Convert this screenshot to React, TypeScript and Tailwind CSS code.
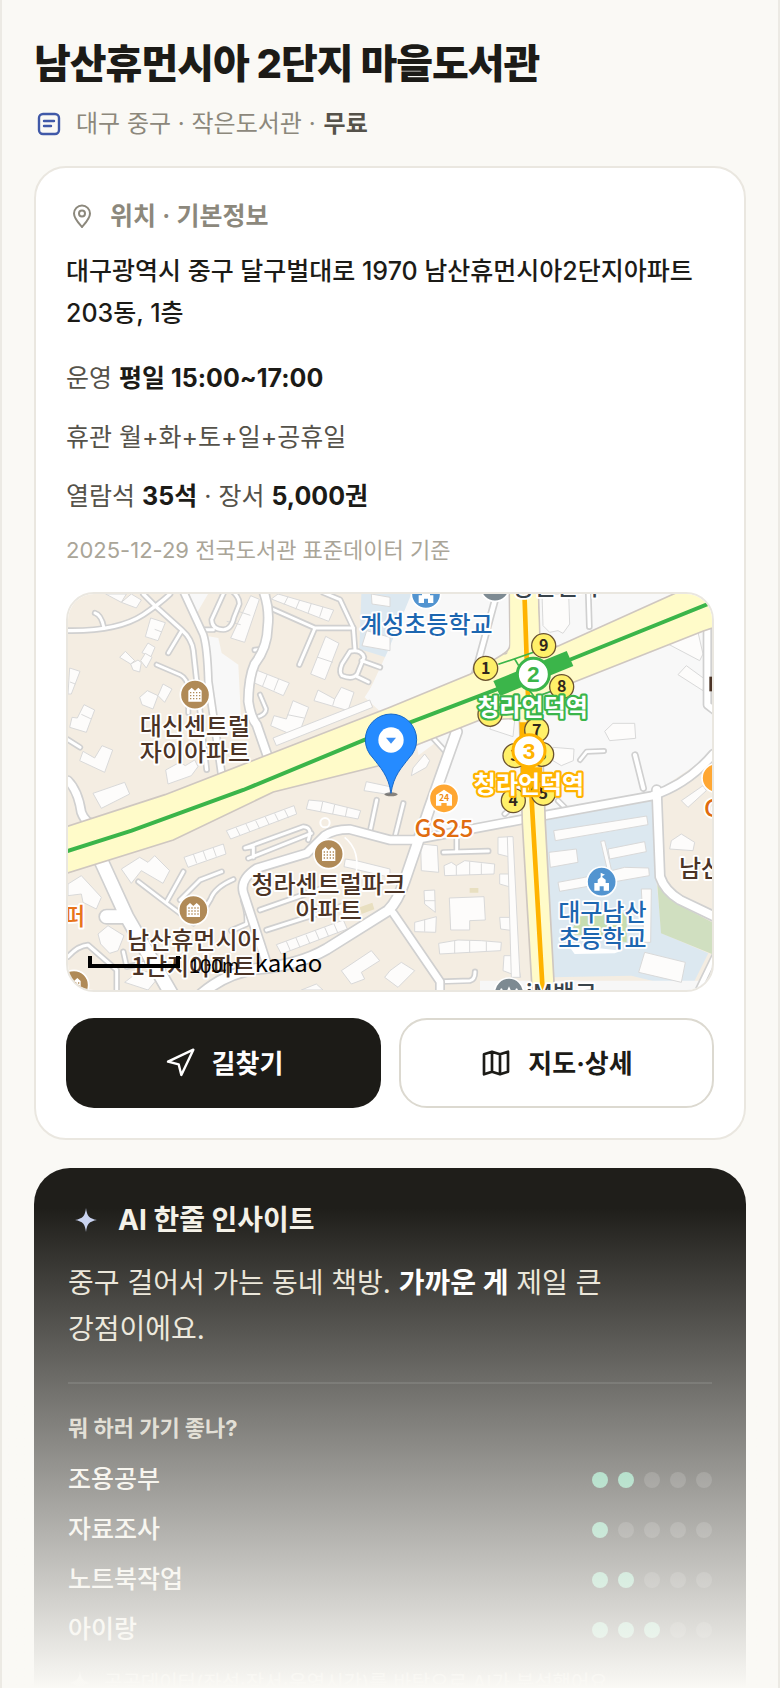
import React from "react";

type Road = { d: string; w: number };

const roads: Road[] = [
  { d: "M0 110 Q150 112 226 62 Q280 25 306 0", w: 10 },
  { d: "M226 0 L266 40 L341 107 Q372 135 376 170 L386 262 L416 527", w: 10 },
  { d: "M341 110 L301 177", w: 9 },
  { d: "M81 57 Q100 62 108 102", w: 9 },
  { d: "M436 107 L406 107 M466 0 L431 77 Q432 107 466 107 Q490 106 498 70 L514 30 Q514 8 491 -10", w: 9 },
  { d: "M606 42 L741 102 H856 M741 102 L694 212", w: 9 },
  { d: "M766 -4 L816 17 L856 102 L861 167", w: 9 },
  { d: "M846 172 Q880 165 888 190 L868 240 Q855 258 822 245 Q812 235 822 210 Z M881 200 L936 220 M866 247 L901 264", w: 9 },
  { d: "M266 212 L336 242 Q361 255 361 290 V357", w: 8 },
  { d: "M576 302 L594 345 Q594 362 566 370", w: 8 },
  { d: "M0 437 L36 460", w: 9 },
  { d: "M560 168 L590 165", w: 9 },
  { d: "M0 560 Q30 590 40 655 Q55 695 90 690", w: 22 },
  { d: "M926 618 L906 713 M1006 628 L981 728", w: 9 },
  { d: "M1166 728 V773 M1126 775 L1261 771", w: 9 },
  { d: "M211 863 L296 928 L376 988 M296 923 L346 833 M336 918 L396 858 L461 833", w: 9 },
  { d: "M496 856 Q440 880 428 915 L396 968", w: 9 },
  { d: "M541 793 L730 718 M531 762 L706 698 Q735 700 721 738 M531 762 L556 758 V790", w: 9 },
  { d: "M576 948 L776 878 M596 1008 L846 928 M526 920 Q540 960 536 990 L490 1010", w: 10 },
  { d: "M0 1088 Q30 1055 60 1053 L146 1128 V1188 M166 1073 L176 1118 L230 1108", w: 9 },
  { d: "M1116 1163 L1206 1160 Q1221 1156 1221 1133", w: 9 },
  { d: "M1281 18 L1221 238", w: 14 },
  { d: "M1561 0 L1564 98", w: 10 },
  { d: "M1701 483 L1726 583", w: 12 },
  { d: "M1536 498 L1556 473 L1608 471", w: 8 },
  { d: "M1096 433 L1130 470 M1310 660 L1350 625 M1470 620 L1500 650", w: 9 },
];

const mainRoads: Road[] = [
  { d: "M345 -10 L406 122 Q418 160 421 262 L461 540", w: 17 },
  { d: "M586 -10 Q606 45 599 100 Q598 160 560 210 Q542 250 541 322 Q548 370 566 392 L600 490", w: 23 },
  { d: "M90 780 L176 968 L310 1200 M176 968 L115 968", w: 38 },
  { d: "M596 1108 L526 895 Q516 855 566 823 L716 778 L770 725 Q800 705 846 706 L966 738 L1036 738 L1366 676 L1751 606 Q1860 570 1936 480", w: 22 },
  { d: "M400 1200 Q470 1140 560 1125 Q690 1115 776 1065 L960 950 Q990 920 1010 860 L1086 638 L1166 413", w: 28 },
  { d: "M976 958 L1116 1163 V1200", w: 20 },
  { d: "M1766 588 L1776 848 Q1790 890 1836 918 L1940 968", w: 24 },
  { d: "M1886 1200 L1940 1088", w: 14 },
  { d: "M1918 90 V333 L1940 350", w: 18 },
];

const buildings = [
  "113,0 160,25 175,0", "160,25 190,0 220,18 205,42",
  "248,72 292,86 270,140 232,128", "240,147 261,160 249,188 222,176",
  "155,190 172,172 200,200 188,210", "188,210 210,198 220,206 215,234 195,228", "218,200 232,178 252,190 235,222",
  "5,222 36,232 10,300 0,300", "215,310 238,290 270,305 255,345 222,332", "285,270 312,285 290,325 270,305",
  "48,332 80,348 55,415 5,400 12,370 28,372", "102,455 134,468 110,535 35,500 45,472 80,492",
  "293,528 335,505 352,515 380,498 390,518 370,545 300,570",
  "548,5 574,16 530,145 488,132", "630,0 797,48 782,82 610,15",
  "773,127 813,148 771,257 728,240", "565,228 664,267 646,305 555,265",
  "675,320 722,340 700,400 690,430 608,395 618,365 655,375",
  "750,288 800,315 820,280 858,295 840,350 738,320",
  "615,432 905,318 914,340 625,455", "910,0 966,10 966,38 912,30", "896,110 966,130 966,170 882,155",
  "895,563 966,578 966,602 888,590",
  "75,598 170,565 185,600 100,643", "475,710 678,635 686,660 488,735",
  "348,790 466,750 474,780 360,820", "722,618 765,622 878,650 870,675 715,645",
  "160,825 215,790 240,805 260,785 305,830 285,868 220,830 190,868",
  "0,870 40,845 100,910 85,945 45,925 40,900 0,905",
  "90,1020 120,995 168,1025 150,1070 125,1078 98,1050",
  "832,795 865,800 966,825 966,850 828,818", "625,1052 826,978 838,1005 640,1080",
  "820,1130 910,1070 935,1100 880,1135 890,1155 850,1170",
  "170,1165 215,1130 280,1140 240,1188", "700,1188 745,1170 765,1188",
  "1058,750 1108,755 1112,835 1060,830", "1128,815 1150,805 1165,815 1190,800 1280,810 1278,840 1130,845",
  "1290,730 1330,728 1330,790 1290,780", "1295,840 1330,840 1330,880 1295,870", "1295,970 1330,970 1335,1010 1298,1005",
  "1144,912 1248,908 1252,978 1205,980 1205,1008 1148,1008",
  "1068,890 1100,888 1102,955 1070,930", "1040,985 1105,968 1103,1015 1040,1013",
  "1112,1048 1170,1038 1240,1040 1300,1045 1298,1070 1115,1080",
  "1308,1085 1345,1085 1358,1150 1305,1130", "966,1130 1000,1105 1040,1130 990,1180 950,1150",
  "1422,0 1502,0 1505,90 1485,118 1470,110 1445,115 1425,95",
  "1800,150 1890,115 1905,180 1895,200", "1855,215 1910,255 1905,290 1830,242",
  "1610,412 1635,388 1700,388 1703,433 1625,440", "1455,460 1518,465 1516,500 1480,515 1455,500",
  "1265,405 1290,365 1340,378 1335,428", "1035,522 1070,480 1085,500 1075,520 1030,545",
  "1457,710 1736,666 1740,692 1462,740", "1443,775 1525,765 1530,805 1447,820",
  "1620,765 1730,743 1735,773 1625,795", "1470,865 1550,850 1670,820 1742,822 1744,845 1475,892",
  "1720,885 1750,885 1748,1045 1728,1045", "1730,1075 1852,1105 1840,1165 1712,1135",
  "1810,740 1840,720 1880,745 1875,770 1805,765", "1840,620 1905,575 1915,590 1860,640",
];

type MarkerProps = { x: number; y: number; color: string; children?: React.ReactNode };

const Marker: React.FC<MarkerProps> = ({ x, y, color, children }) => (
  <g transform={`translate(${x} ${y})`}>
    <circle r="44" fill={color} stroke="#fff" strokeWidth="5" />
    {children}
  </g>
);

const Apartment: React.FC<{ x: number; y: number }> = ({ x, y }) => (
  <Marker x={x} y={y} color="#b08a57">
    <path d="M-20 21 V-12 L-10 -21 L0 -12 L10 -21 L20 -12 V21 Z" fill="#fff" />
    <path
      d="M-15 -6 H16 M-15 3 H16 M-15 12 H16"
      stroke="#b08a57"
      strokeWidth="4"
      strokeDasharray="4 5"
    />
  </Marker>
);

const School: React.FC<{ x: number; y: number }> = ({ x, y }) => (
  <Marker x={x} y={y} color="#5294d0">
    <path
      d="M-22 27 V4 H-12 V-6 L-3 -13 V-27 L10 -21 L2 -17 V-13 L12 -6 V4 H22 V27 H6 V14 H-6 V27 Z"
      fill="#fff"
    />
  </Marker>
);

type LabelProps = {
  x: number;
  y: number;
  color: string;
  lines: string[];
  halo?: string;
  anchor?: "start" | "middle" | "end";
};

const Label: React.FC<LabelProps> = ({ x, y, color, lines, halo = "#fff", anchor = "middle" }) => (
  <text
    textAnchor={anchor}
    fill={color}
    stroke={halo}
    strokeWidth="11"
    strokeLinejoin="round"
    paintOrder="stroke"
    fontSize="72"
    className="font-medium"
  >
    {lines.map((line, i) => (
      <tspan key={line} x={x} y={y + i * 78}>
        {line}
      </tspan>
    ))}
  </text>
);

// White station name with a line-coloured outline
const Station: React.FC<{ x: number; y: number; color: string; name: string }> = ({ x, y, color, name }) => (
  <text
    x={x}
    y={y}
    textAnchor="middle"
    fill="#fff"
    stroke={color}
    strokeWidth="13"
    strokeLinejoin="round"
    paintOrder="stroke"
    fontSize="72"
    className="font-bold"
  >
    {name}
  </text>
);

const exits = [
  { n: "9", x: 1427, y: 155 },
  { n: "1", x: 1253, y: 223 },
  { n: "8", x: 1481, y: 278 },
  { n: "2", x: 1266, y: 361 },
  { n: "7", x: 1406, y: 408 },
  { n: "3", x: 1341, y: 485 },
  { n: "6", x: 1421, y: 481 },
  { n: "4", x: 1336, y: 620 },
  { n: "5", x: 1426, y: 598 },
];

const RoadLayer: React.FC<{ items: Road[] }> = ({ items }) => (
  <g fill="none" strokeLinecap="round" strokeLinejoin="round">
    {items.map((r) => (
      <path key={r.d} d={r.d} stroke="#d0d0d0" strokeWidth={r.w + 10} />
    ))}
    {items.map((r) => (
      <path key={r.d} d={r.d} stroke="#fff" strokeWidth={r.w} />
    ))}
  </g>
);

const LibraryMap: React.FC = () => (
  <svg
    viewBox="0 0 1932 1188"
    role="img"
    aria-label="도서관 주변 지도"
    className="block w-full font-['Noto_Sans_CJK_KR',sans-serif]"
  >
    <rect width="1932" height="1188" fill="#f4ede2" />

    {/* Ground */}
    <path d="M960 200 L1020 0 H1932 V480 L1740 610 L1350 680 L1100 740 L1046 453 L890 310 Z" fill="#f8f8f8" />
    <path d="M880 0 H1075 L1030 80 L970 195 L874 165 Z" fill="#dce8f0" />
    <path d="M1030 0 H1300 L1210 240 L960 335 L894 312 L960 170 Z" fill="#f8f8f8" />
    <path d="M365 0 H420 L385 60 Z M421 127 L451 132 L461 177 L511 212 L521 412 H446 Z" fill="#f8f8f8" />
    <path d="M1030 500 L1110 440 L1130 470 L1080 610 L970 670 Z" fill="#f4ede2" />
    <path d="M1433 678 L1751 616 L1766 868 L1781 1018 L1921 1078 L1866 1188 L1690 1145 L1450 1150 Z" fill="#dce8f0" />
    <path d="M1768 873 L1820 925 L1932 985 V1080 L1779 1018 Z" fill="#d0dfc0" />
    <path d="M1526 968 L1676 955 V1045 L1510 1020 Z" fill="#c6ddb0" />
    <path d="M1500 1052 L1660 1070 L1640 1078 L1520 1080 Z" fill="#fff" />
    <path d="M1236 1160 H1932 V1188 H1236 Z" fill="#f7f7f7" />
    <path d="M1205 882 h26 v14 h-26 Z M875 940 l38 -14 l6 20 l-38 14 Z" fill="#e8dfc0" />

    <g fill="#fdfcfb" stroke="#d9d9d9" strokeWidth="3">
      {buildings.map((points) => (
        <polygon key={points} points={points} />
      ))}
      <path d="M260 106 l22 8 M22 270 l-16 -6 M70 375 l-30 -14 M505 50 l42 14 M518 92 l-42 -10 M660 8 l-12 24 M695 18 l-12 28 M730 28 l-10 30 M765 38 l-10 30 M795 205 l-48 -16 M598 240 l-14 36 M632 254 l-14 36 M708 372 l-50 -10 M800 315 l-6 20" />
      <path d="M504 700 l12 24 M534 690 l12 24 M563 680 l12 24 M592 669 l12 24 M620 658 l12 24 M650 648 l12 24 M376 780 l10 28 M405 770 l10 28 M435 760 l10 28 M764 624 l-6 28 M800 632 l-6 28 M838 640 l-6 28" />
      <path d="M655 1042 l12 28 M684 1032 l12 28 M714 1022 l12 28 M742 1010 l12 28 M770 1000 l12 28 M798 990 l12 28 M1165 815 v28 M1205 803 v40 M1240 808 v34 M1160 1040 v38 M1205 1040 v36 M1255 1042 v30 M1070 920 h32 M1070 975 v38" />
      <path d="M1335 728 L1356 1150 H1330 L1318 728 Z M1598 742 l12 -2 l20 86 l-12 2 Z" />
    </g>
    <circle cx="771" cy="686" r="14" fill="none" stroke="#fff" strokeWidth="6" />
    <path d="M830 730 Q880 770 862 850" fill="none" stroke="#fff" strokeWidth="5" />

    <RoadLayer items={roads} />
    <RoadLayer items={mainRoads} />

    {/* Boulevards */}
    <g stroke="#cfc7c0" strokeWidth="5">
      <path d="M1324 -10 L1326 150 Q1326 168 1306 180 L1236 378 L1354 373 L1363 688 L1393 1200 H1460 L1432 688 L1418 300 L1466 158 Q1416 175 1416 150 L1411 -10 Z" fill="#fffbc9" />
      <path d="M-10 700 L291 602 L966 340 L1206 241 L1306 180 L1466 158 L1830 -6 L1950 -6 V96 L1906 111 L1496 273 L1236 378 L1046 453 L966 507 L616 594 L316 738 L-10 840 Z" fill="#fffbc9" />
    </g>
    <path d="M1327 -10 V165 Q1320 180 1290 205 V310 H1418 L1430 180 Q1413 170 1413 150 L1408 -10 Z" fill="#fffbc9" />
    <path d="M-10 774 L191 710 L526 588 L891 437 L1286 286 L1511 195 L1940 22" fill="none" stroke="#3bb54a" strokeWidth="12" />
    <path d="M1369 -10 L1376 193 L1391 618 L1424 1190" fill="none" stroke="#ffb300" strokeWidth="14" />
    <path d="M1354 385 H1400 V520 H1422 V580 H1360 Z" fill="#ffb300" />
    <path d="M1291 211 L1416 168 M1340 195 L1352 215 M1385 290 L1400 310 L1450 292" fill="none" stroke="#3bb54a" strokeWidth="5" />
    <polygon points="1276,261 1496,171 1516,216 1296,306" fill="#3bb54a" />

    {/* Subway exits */}
    {exits.map((e) => (
      <g key={e.n}>
        <circle cx={e.x} cy={e.y} r="36" fill="#fff069" stroke="#6b5330" strokeWidth="4" />
        <text x={e.x} y={e.y + 17} textAnchor="middle" fontSize="48" fill="#30281c" className="font-bold">
          {e.n}
        </text>
      </g>
    ))}
    <circle cx="1396" cy="241" r="48" fill="#fff" stroke="#3bb54a" strokeWidth="9" />
    <text x="1396" y="265" textAnchor="middle" fontSize="68" fill="#3bb54a" className="font-['Liberation_Sans',sans-serif] font-bold">2</text>
    <circle cx="1383" cy="470" r="48" fill="#fff" stroke="#ffb300" strokeWidth="9" />
    <text x="1383" y="494" textAnchor="middle" fontSize="68" fill="#ffb300" className="font-['Liberation_Sans',sans-serif] font-bold">3</text>

    {/* Places */}
    <Apartment x={381} y={302} />
    <Apartment x={782} y={780} />
    <Apartment x={376} y={948} />
    <Apartment x={18} y={1173} />
    <School x={1074} y={0} />
    <School x={1601} y={863} />
    <Marker x={1128} y={613} color="#ffa733">
      <path d="M-24 22 V-10 L0 -26 L24 -10 V22 H8 V14 H-8 V22 Z" fill="#fff" />
      <text y="8" textAnchor="middle" fontSize="26" fill="#f08c14" className="font-bold">24</text>
    </Marker>
    <Marker x={1946} y={552} color="#ffa733" />
    <Marker x={1281} y={-22} color="#7d8a92" />
    <Marker x={1323} y={1196} color="#7d8a92">
      <path d="M-24 -12 L-12 14 L0 -12 L12 14 L24 -12" fill="none" stroke="#fff" strokeWidth="6" />
    </Marker>

    <Label x={1075} y={117} color="#1c66b0" lines={["계성초등학교"]} />
    <Label x={381} y={422} color="#4b3325" lines={["대신센트럴", "자이아파트"]} />
    <Label x={782} y={897} color="#4b3325" lines={["청라센트럴파크", "아파트"]} />
    <Label x={376} y={1065} color="#4b3325" lines={["남산휴먼시아", "1단지아파트"]} />
    <Label x={1603} y={980} color="#1c66b0" lines={["대구남산", "초등학교"]} />
    <Label x={1128} y={728} color="#e06c10" lines={["GS25"]} />
    <Label x={1833} y={848} color="#4b3325" lines={["남산"]} anchor="start" />
    <Label x={1908} y={668} color="#e06c10" lines={["G"]} anchor="start" />
    <Label x={52} y={992} color="#e8741a" lines={["퍼"]} anchor="end" />
    <Label x={1463} y={3} color="#39444c" lines={["청민연가"]} />
    <Label x={1480} y={1224} color="#39444c" lines={["iM뱅크"]} />
    <rect x="1924" y="248" width="8" height="44" fill="#4b3325" />
    <Station x={1394} y={366} color="#3bb54a" name="청라언덕역" />
    <Station x={1383} y={596} color="#ffb300" name="청라언덕역" />

    {/* Library pin */}
    <ellipse cx="969" cy="601" rx="20" ry="6" fill="#000" opacity="0.45" />
    <path
      d="M969 598 C962 545 936 520 915 492 A77 77 0 1 1 1023 492 C1002 520 976 545 969 598 Z"
      fill="#258bff"
      stroke="#1668c8"
      strokeWidth="3"
    />
    <circle cx="969" cy="438" r="38" fill="#fff" />
    <polygon points="954,431 984,431 969,449" fill="#3b8ff5" />

    {/* Scale */}
    <path d="M66 1086 V1116 H330 V1086" fill="none" stroke="#000" strokeWidth="12" />
    <text x="363" y="1138" fontSize="60" fill="#000" className="font-['Liberation_Sans',sans-serif]">100m</text>
    <text x="560" y="1133" fontSize="72" fill="#000">kakao</text>
  </svg>
);

const purposes = [
  { name: "조용공부", score: 2 },
  { name: "자료조사", score: 1 },
  { name: "노트북작업", score: 2 },
  { name: "아이랑", score: 3 },
];

const Sparkle: React.FC<{ className: string }> = ({ className }) => (
  <svg viewBox="0 0 24 24" className={className} aria-hidden="true">
    <path d="M12 0 C13 8 15 10.5 23 12 C15 13.5 13 16 12 24 C11 16 9 13.5 1 12 C9 10.5 11 8 12 0 Z" fill="currentColor" />
  </svg>
);

const App: React.FC = () => {
  return (
    <main className="relative h-screen w-full overflow-hidden border-x-2 border-[#eceae4] bg-[#faf9f5] px-8 pt-[38px] font-['Inter','Noto_Sans_CJK_KR',sans-serif] break-keep text-[#1c1b17]">
      <h1 className="text-[40px] leading-[52px] font-extrabold tracking-tight">
        남산휴먼시아 2단지 마을도서관
      </h1>
      <p className="mt-4 flex items-center gap-3 text-2xl leading-9 text-[#8c887c]">
        <svg viewBox="0 0 30 30" className="size-[30px]" fill="none" stroke="#4059a8" strokeWidth="2.4" strokeLinecap="round" aria-hidden="true">
          <rect x="5" y="5" width="20" height="20" rx="4" />
          <path d="M10 12 H20 M10 17 H17" />
        </svg>
        <span>
          대구 중구 · 작은도서관 ·
          <strong className="ml-2 font-semibold text-[#55524a]">무료</strong>
        </span>
      </p>

      <section className="mt-6 rounded-[32px] border-2 border-[#eae7e0] bg-white p-[30px]">
        <h2 className="flex items-center gap-3 text-[25px] leading-9 font-semibold text-[#8c887c]">
          <span className="flex w-8 justify-center">
            <svg viewBox="0 0 24 24" className="size-6" fill="none" stroke="currentColor" strokeWidth="2" strokeLinejoin="round" aria-hidden="true">
              <path d="M12 23 C9 19.5 4 14.5 4 9.5 a8 8 0 0 1 16 0 C20 14.5 15 19.5 12 23 Z" />
              <circle cx="12" cy="9.5" r="3" />
            </svg>
          </span>
          위치 · 기본정보
        </h2>
        <p className="mt-4 text-[25px] leading-[42px] font-medium">
          대구광역시 중구 달구벌대로 1970 남산휴먼시아2단지아파트 203동, 1층
        </p>
        <div className="mt-[26px] flex flex-col gap-[23px] text-[25px] leading-9 text-[#55524a]">
          <p>
            운영 <strong className="font-bold text-[#1c1b17]">평일 15:00~17:00</strong>
          </p>
          <p>휴관 월+화+토+일+공휴일</p>
          <p>
            열람석 <strong className="font-bold text-[#1c1b17]">35석</strong> · 장서{" "}
            <strong className="font-bold text-[#1c1b17]">5,000권</strong>
          </p>
        </div>
        <p className="mt-5 text-[22px] leading-8 text-[#aaa598]">
          2025-12-29 전국도서관 표준데이터 기준
        </p>

        <div className="mt-[26px] overflow-hidden rounded-[28px] border-2 border-[#eae7e0]">
          <LibraryMap />
        </div>

        <div className="mt-[26px] grid grid-cols-2 gap-[18px] text-[26px] font-bold">
          <button type="button" className="flex h-[90px] items-center justify-center gap-4 rounded-[28px] bg-[#1c1b17] text-white">
            <svg viewBox="0 0 24 24" className="size-8" fill="none" stroke="currentColor" strokeWidth="1.8" strokeLinejoin="round" aria-hidden="true">
              <polygon points="3 11 22 2 13 21 11 13 3 11" />
            </svg>
            길찾기
          </button>
          <button type="button" className="flex h-[90px] items-center justify-center gap-4 rounded-[28px] border-2 border-[#dcd9d0] bg-white">
            <svg viewBox="0 0 24 24" className="size-8" fill="none" stroke="currentColor" strokeWidth="2" strokeLinejoin="round" aria-hidden="true">
              <path d="M3 5.5 L9 3.5 L15 5.5 L21 3.5 V18.5 L15 20.5 L9 18.5 L3 20.5 Z M9 3.5 V18.5 M15 5.5 V20.5" />
            </svg>
            지도·상세
          </button>
        </div>
      </section>

      <section className="mt-7 rounded-[36px] bg-[#1f1e1a] p-[34px] text-[#f4f1e8]">
        <h2 className="flex items-center gap-3.5 text-[28px] leading-9 font-bold">
          <span className="flex w-9 justify-center text-[#c8d2f0]">
            <Sparkle className="size-6" />
          </span>
          AI 한줄 인사이트
        </h2>
        <p className="mt-[22px] text-[28px] leading-[46px] text-[#e8e3d5]">
          중구 걸어서 가는 동네 책방. <strong className="font-bold text-white">가까운 게</strong> 제일 큰 강점이에요.
        </p>
        <div className="mt-[30px] border-t-2 border-white/10 pt-[26px]">
          <h3 className="text-[22px] leading-9 font-bold text-[#cfcabc]">뭐 하러 가기 좋나?</h3>
          <ul className="mt-[9px]">
            {purposes.map((p) => (
              <li key={p.name} className="flex h-[50px] items-center justify-between text-[25px] font-medium">
                {p.name}
                <span className="flex gap-2.5" role="img" aria-label={`5점 중 ${p.score}점`}>
                  {[1, 2, 3, 4, 5].map((n) => (
                    <span key={n} className={`size-4 rounded-full ${n <= p.score ? "bg-[#66c49c]" : "bg-white/15"}`} />
                  ))}
                </span>
              </li>
            ))}
          </ul>
        </div>
        <p className="mt-3 flex items-center gap-3 text-[20px] leading-8 text-[#cfcabc]">
          <Sparkle className="size-6" />
          공공데이터(좌석·장서·운영시간)를 바탕으로 AI가 분석했어요
        </p>
      </section>

      {/* Fade over the rest of the page */}
      <div className="pointer-events-none absolute inset-x-0 bottom-0 h-[480px] bg-gradient-to-b from-[#faf9f5]/0 to-[#faf9f5]" />
    </main>
  );
};

export default App;
